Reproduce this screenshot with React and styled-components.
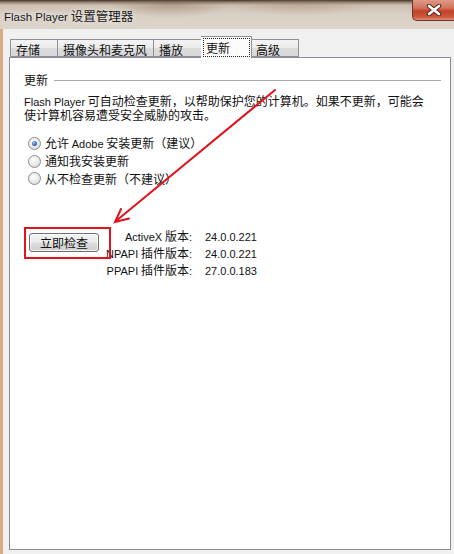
import styled, { createGlobalStyle } from 'styled-components'

const GlobalStyle = createGlobalStyle`
  html, body { margin: 0; padding: 0; background: #f0f0f0; }
  body {
    font-family: "Noto Sans CJK SC", "Liberation Sans", sans-serif;
    font-size: 12px;
    color: #111;
  }
`;

const tabs = ['存储', '摄像头和麦克风', '播放', '更新', '高级'];

const versions = [
  ['ActiveX', '版本', '24.0.0.221'],
  ['NPAPI', '插件版本', '24.0.0.221'],
  ['PPAPI', '插件版本', '27.0.0.183'],
];

export default function App() {
  // built here so the styled spans exist by the time this runs
  const options = [
    { label: <>允许 <Latin>Adobe</Latin> 安装更新（建议）</>, checked: true },
    { label: '通知我安装更新', checked: false },
    { label: '从不检查更新（不建议）', checked: false },
  ];

  return (
    <Window>
      <GlobalStyle />
      <TitleBar>
        <Title><Latin $size="11.5px">Flash Player</Latin> 设置管理器</Title>
        <CloseButton>
          <svg width="16" height="12" viewBox="0 0 16 12">
            <path d="M3 2 L13 10 M13 2 L3 10" stroke="#5a2418" strokeWidth="4.5" strokeLinecap="round" />
            <path d="M3 2 L13 10 M13 2 L3 10" stroke="#fff" strokeWidth="2.6" strokeLinecap="round" />
          </svg>
        </CloseButton>
      </TitleBar>

      <Client>
        <TabStrip>
          {tabs.map((t) => (
            <Tab key={t} $active={t === '更新'}>
              {t === '更新' ? <Focus>{t}</Focus> : t}
            </Tab>
          ))}
        </TabStrip>

        <Panel>
          <GroupHeader>
            <span>更新</span>
            <Rule />
          </GroupHeader>

          <Description>
            <Line><Latin>Flash Player</Latin> 可自动检查更新，以帮助保护您的计算机。如果不更新，可能会</Line>
            <Line>使计算机容易遭受安全威胁的攻击。</Line>
          </Description>

          <RadioList>
            {options.map((o, i) => (
              <RadioRow key={i}>
                <Radio $checked={o.checked} />
                <span>{o.label}</span>
              </RadioRow>
            ))}
          </RadioList>

          <BottomRow>
            <Highlight>
              <Button>立即检查</Button>
            </Highlight>
            <VersionGrid>
              {versions.map(([name, word, num]) => (
                <VersionRow key={name}>
                  <VersionLabel><Latin>{name}</Latin> {word}<Latin>:</Latin></VersionLabel>
                  <VersionValue><Latin>{num}</Latin></VersionValue>
                </VersionRow>
              ))}
            </VersionGrid>
          </BottomRow>
        </Panel>
      </Client>

      <Overlay width="454" height="554" viewBox="0 0 454 554">
        <g stroke="#e0121c" strokeWidth="2" fill="none" strokeLinecap="round">
          <line x1="275" y1="90" x2="116" y2="221" />
          <polyline points="121,209 115,222 129,218.5" />
        </g>
      </Overlay>
    </Window>
  )
}

const Window = styled.div`
  position: relative;
  width: 454px;
  height: 554px;
  display: flex;
  flex-direction: column;
  overflow: hidden;
`;

const TitleBar = styled.div`
  height: 29px;
  flex: none;
  display: flex;
  justify-content: space-between;
  align-items: flex-start;
  background:
    radial-gradient(60px 14px at 170px 4px, rgba(120, 90, 60, 0.35), transparent),
    radial-gradient(70px 12px at 300px 4px, rgba(140, 110, 80, 0.3), transparent),
    linear-gradient(to bottom, #3e3026 0, #8c7a6a 2px, #cdbfb1 5px, #d9cfc5 14px, #dcd4ca 29px);
`;

const Title = styled.div`
  padding: 8px 0 0 4px;
  font-size: 12.5px;
  line-height: 16px;
  color: #1b1b1b;
  text-shadow: 0 0 6px rgba(255, 255, 255, 0.8);
`;

const CloseButton = styled.div`
  width: 41px;
  height: 20px;
  display: flex;
  align-items: center;
  justify-content: center;
  border: 1px solid #6e3426;
  border-top: none;
  border-right: none;
  border-bottom-left-radius: 5px;
  background: linear-gradient(to bottom, #dc9a86 0%, #d2735b 40%, #c2402a 55%, #cc5a40 85%, #de9074 100%);
`;

const Client = styled.div`
  flex: 1;
  display: flex;
  flex-direction: column;
  background: #f0f0f0;
  border-left: 3px solid #d8aa86;
  padding: 7px 3px 4px 6px;
`;

const TabStrip = styled.div`
  display: flex;
  align-items: flex-end;
  padding-left: 1px;
  position: relative;
  z-index: 1;
  height: 21px;
`;

const Tab = styled.div`
  min-width: ${({ $active }) => ($active ? '51px' : '48px')};
  height: ${({ $active }) => ($active ? '22px' : '18px')};
  margin: ${({ $active }) => ($active ? '0 -1px -1px' : '0')};
  padding: ${({ $active }) => ($active ? '1px 1px 0 2px' : '2px 6px 0 5px')};
  display: flex;
  align-items: flex-start;
  box-sizing: border-box;
  border: 1px solid #8e9198;
  border-bottom: ${({ $active }) => ($active ? 'none' : '1px solid #8e9198')};
  background: ${({ $active }) =>
    $active ? '#fcfcfc' : 'linear-gradient(to bottom, #f4f4f4 0%, #ebebeb 50%, #dcdcdc 51%, #d8d8d8 100%)'};
  font-size: 12px;
  line-height: 15px;
  color: #111;
  position: relative;
  z-index: ${({ $active }) => ($active ? 2 : 0)};
  & + & { border-left: none; }
`;

const Focus = styled.span`
  flex: 1;
  height: 19px;
  box-sizing: border-box;
  border: 1px dotted #222;
  padding: 1px 0 0 2px;
  line-height: 15px;
`;

const Panel = styled.div`
  flex: 1;
  background: #fff;
  border: 1px solid #898c95;
  padding: 15px 9px 0 14px;
`;

const GroupHeader = styled.div`
  display: flex;
  align-items: center;
  gap: 6px;
  height: 14px;
  line-height: 14px;
`;

const Rule = styled.div`
  flex: 1;
  height: 1px;
  background: #a8a8a8;
`;

const Description = styled.div`
  margin-top: 7px;
  display: flex;
  flex-direction: column;
`;

const Line = styled.div`
  height: 14px;
  line-height: 14px;
  white-space: nowrap;
`;

const RadioList = styled.div`
  margin-top: 13px;
  padding-left: 4px;
`;

const RadioRow = styled.label`
  display: flex;
  align-items: center;
  gap: 4px;
  height: 17.5px;
  line-height: 14px;
`;

const Radio = styled.span`
  width: 11px;
  height: 11px;
  border-radius: 50%;
  border: 1px solid #8d8d8d;
  background: radial-gradient(circle at 40% 35%, #ffffff 0%, #e6e6e6 60%, #c8c8c8 100%);
  display: flex;
  align-items: center;
  justify-content: center;
  flex: none;
  &::after {
    content: '';
    display: ${({ $checked }) => ($checked ? 'block' : 'none')};
    width: 5px;
    height: 5px;
    border-radius: 50%;
    background: radial-gradient(circle at 40% 35%, #9cc6f0 0%, #2a68b4 60%, #173e78 100%);
  }
`;

const BottomRow = styled.div`
  margin-top: 39px;
  display: flex;
  align-items: flex-start;
`;

const Highlight = styled.div`
  border: 2px solid #e0141e;
  padding: 4px 10px 5px 3px;
  position: relative;
  z-index: 1;
  flex: none;
`;

const Button = styled.button`
  display: block;
  width: 70px;
  height: 19px;
  padding: 0;
  border: 1px solid #707070;
  border-radius: 3px;
  background: linear-gradient(to bottom, #f2f2f2 0%, #ebebeb 48%, #dddddd 52%, #cfcfcf 100%);
  font-family: "Noto Sans CJK SC", sans-serif;
  font-size: 12px;
  line-height: 15px;
  color: #111;
  box-shadow: inset 0 0 0 1px rgba(255, 255, 255, 0.7);
`;

const VersionGrid = styled.div`
  display: grid;
  grid-template-columns: auto auto;
  grid-auto-rows: 17px;
  column-gap: 13px;
  margin-left: -5px;
`;

const VersionRow = styled.div`
  display: contents;
`;

const VersionLabel = styled.div`
  height: 17px;
  line-height: 17px;
  text-align: right;
  white-space: nowrap;
`;

const VersionValue = styled.div`
  height: 17px;
  line-height: 17px;
`;

const Latin = styled.span`
  font-family: "Liberation Sans", Arial, sans-serif;
  font-size: ${({ $size }) => $size || '11px'};
`;

const Overlay = styled.svg`
  position: absolute;
  top: 0;
  left: 0;
  pointer-events: none;
`;
